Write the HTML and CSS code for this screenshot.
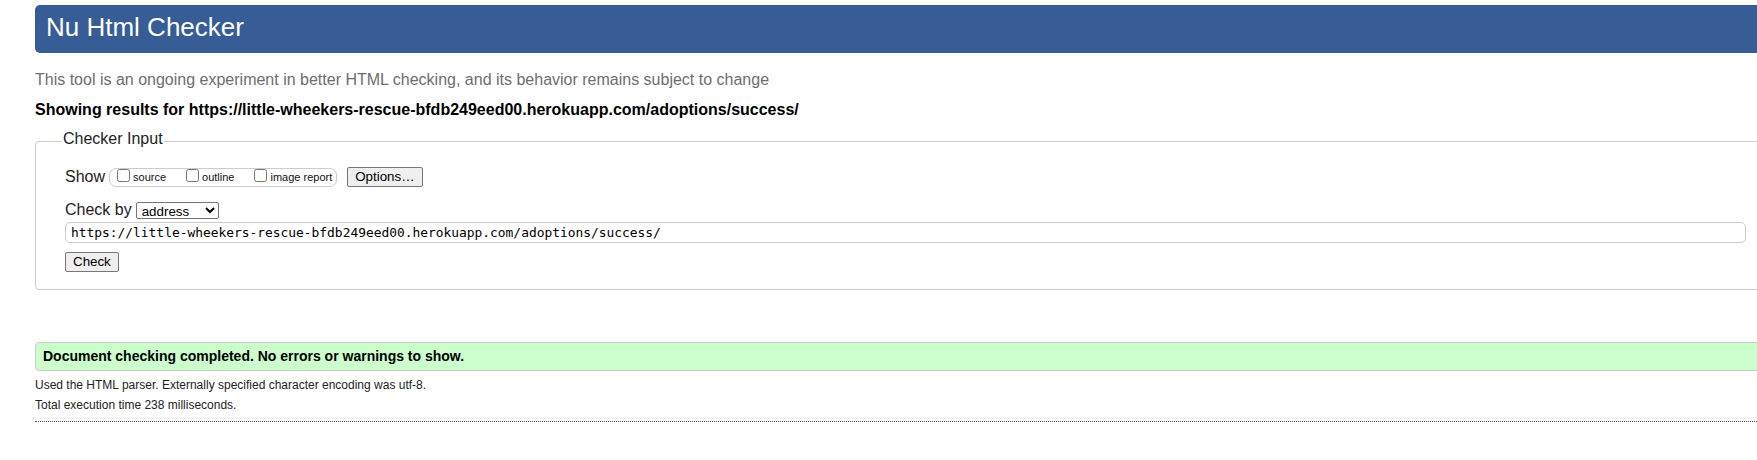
FILE: index.html
```html
<!DOCTYPE html>
<html lang="en">
<head>
<meta charset="utf-8">
<title>Showing results for https://little-wheekers-rescue-bfdb249eed00.herokuapp.com/adoptions/success/ - Nu Html Checker</title>
<link rel="stylesheet" href="styles.css">
</head>
<body>
<div class="page">
  <h1 class="banner">Nu Html Checker</h1>
  <p class="intro">This tool is an ongoing experiment in better HTML checking, and its behavior remains subject to change</p>
  <p class="results-for">Showing results for https://little-wheekers-rescue-bfdb249eed00.herokuapp.com/adoptions/success/</p>
  <form class="checker-form">
    <fieldset class="checker-input">
      <legend class="checker-legend">Checker Input</legend>
      <div class="row row-show">
        <span class="row-label">Show</span>
        <div class="show-options">
          <label class="opt"><input type="checkbox" class="cb"><span class="opt-text">source</span></label>
          <label class="opt"><input type="checkbox" class="cb"><span class="opt-text">outline</span></label>
          <label class="opt"><input type="checkbox" class="cb"><span class="opt-text">image report</span></label>
        </div>
        <button type="button" class="btn btn-options">Options…</button>
      </div>
      <div class="row row-checkby">
        <span class="row-label label-checkby">Check by</span>
        <select class="checkby-select">
          <option>address</option>
          <option>file upload</option>
          <option>text input</option>
        </select>
      </div>
      <input type="url" class="url-input" value="https://little-wheekers-rescue-bfdb249eed00.herokuapp.com/adoptions/success/">
      <div class="row row-submit">
        <button type="submit" class="btn">Check</button>
      </div>
    </fieldset>
  </form>
  <p class="success">Document checking completed. No errors or warnings to show.</p>
  <p class="stats stats-first">Used the HTML parser. Externally specified character encoding was utf-8.</p>
  <p class="stats">Total execution time 238 milliseconds.</p>
  <div class="rule"></div>
</div>
</body>
</html>
```

FILE: styles.css
```css
html, body {
  margin: 0;
  padding: 0;
  background: #ffffff;
}

body {
  overflow: hidden;
  font-family: "Liberation Sans", Arial, sans-serif;
  color: #222222;
}

.page {
  width: 1800px;
  padding: 5px 0 0 35px;
}

.banner {
  margin: 0;
  height: 48px;
  box-sizing: border-box;
  padding: 0 11px;
  background: #365d95;
  color: #ffffff;
  font-size: 26px;
  font-weight: normal;
  line-height: 44px;
  border-radius: 5px;
}

.intro {
  margin: 17px 0 0;
  font-size: 16px;
  line-height: 20px;
  color: #6e6e6e;
}

.results-for {
  margin: 10px 0 0;
  font-size: 16px;
  line-height: 20px;
  font-weight: bold;
  color: #000000;
}

.checker-form {
  margin: 10px 0 0;
}

.checker-input {
  margin: 0;
  padding: 15px 0 17px 29px;
  border: 1px solid #cccccc;
  border-radius: 4px;
  min-width: 0;
}

.checker-legend {
  margin-left: -3px;
  padding: 0 1px 4px;
  font-size: 16px;
  line-height: 18px;
  color: #222222;
}

.row {
  display: flex;
  align-items: center;
}

.row-show {
  height: 20px;
}

.row-label {
  font-size: 16px;
  line-height: 18px;
  color: #222222;
}

.show-options {
  display: flex;
  gap: 16px;
  height: 19px;
  box-sizing: border-box;
  margin-left: 4px;
  padding: 0 4px 0 3px;
  border: 1px solid #cccccc;
  border-radius: 7px;
}

.opt {
  display: flex;
  align-items: flex-start;
  font-size: 11px;
  color: #111111;
}

.cb {
  width: 13px;
  height: 13px;
  margin: 0 3px 0 4px;
}

.opt-text {
  line-height: 17px;
}

.btn {
  height: 20px;
  box-sizing: border-box;
  padding: 0 7px;
  font-family: "Liberation Sans", Arial, sans-serif;
  font-size: 13.33px;
  line-height: 18px;
  color: #000000;
  background: #efefef;
  border: 1px solid #767676;
  border-radius: 2px;
}

.btn-options {
  margin-left: 10px;
}

.row-checkby {
  margin-top: 15px;
  height: 17px;
}

.label-checkby {
  margin-bottom: 2px;
}

.checkby-select {
  margin-left: 4px;
  width: 83px;
  height: 17px;
  box-sizing: border-box;
  padding: 0 0 0 1px;
  font-family: "Liberation Sans", Arial, sans-serif;
  font-size: 13.33px;
  color: #000000;
  background: #ffffff;
  border: 1px solid #767676;
  border-radius: 2px;
}

.url-input {
  display: block;
  margin: 3px 0 0;
  width: 1681px;
  height: 21px;
  box-sizing: border-box;
  padding: 0 5px;
  font-family: "DejaVu Sans Mono", "Liberation Mono", monospace;
  font-size: 12.9px;
  color: #000000;
  background: #ffffff;
  border: 1px solid #cccccc;
  border-radius: 5px;
}

.row-submit {
  margin-top: 9px;
}

.success {
  margin: 52px 0 0;
  padding: 6px 7px;
  font-size: 14px;
  line-height: 15px;
  font-weight: bold;
  color: #000000;
  background: #ccffcc;
  border: 1px solid #cccccc;
  border-radius: 4px;
}

.stats {
  margin: 5px 0 0;
  font-size: 12px;
  line-height: 15px;
  color: #222222;
}

.stats-first {
  margin-top: 7px;
}

.rule {
  margin-top: 8px;
  border-top: 1px dotted #555555;
}
```
